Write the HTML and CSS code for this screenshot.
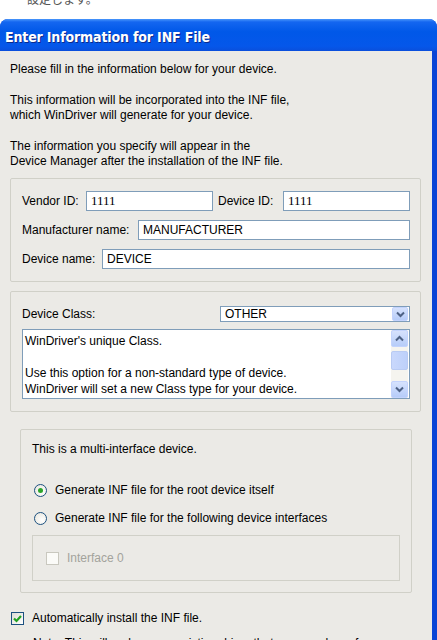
FILE: index.html
```html
<!DOCTYPE html>
<html lang="en">
<head>
    <meta charset="UTF-8">
    <title>Enter Information for INF File</title>
    <link rel="stylesheet" href="styles.css">
</head>
<body>
    <!-- --- TEXT ABOVE THE WINDOW --- -->
    <div class="caption"><p>設定します。</p></div>

    <!-- --- DIALOG WINDOW --- -->
    <div class="window">
        <div class="titlebar">Enter Information for INF File</div>
        <div class="dialog">
            <p class="intro">Please fill in the information below for your device.</p>
            <p class="intro">This information will be incorporated into the INF file,<br>which WinDriver will generate for your device.</p>
            <p class="intro intro-last">The information you specify will appear in the<br>Device Manager after the installation of the INF file.</p>

            <div class="group ids">
                <div class="row">
                    <label class="lbl-vendor">Vendor ID:</label>
                    <input type="text" class="field serif" value="1111">
                    <label class="lbl-device">Device ID:</label>
                    <input type="text" class="field serif" value="1111">
                </div>
                <div class="row">
                    <label class="lbl-manu">Manufacturer name:</label>
                    <input type="text" class="field" value="MANUFACTURER">
                </div>
                <div class="row">
                    <label class="lbl-name">Device name:</label>
                    <input type="text" class="field" value="DEVICE">
                </div>
            </div>

            <div class="group classes">
                <div class="row class-row">
                    <label>Device Class:</label>
                    <div class="combo">
                        <span class="combo-value">OTHER</span>
                        <span class="xp-btn">
                            <svg width="9" height="7" viewBox="0 0 9 7"><path d="M1 1.5 L4.5 5 L8 1.5" fill="none" stroke="#4d6185" stroke-width="2"/></svg>
                        </span>
                    </div>
                </div>
                <div class="memo">
                    <div class="memo-text">
                        WinDriver's unique Class.<br><br>
                        Use this option for a non-standard type of device.<br>
                        WinDriver will set a new Class type for your device.
                    </div>
                    <div class="scrollbar">
                        <span class="xp-btn sb-btn">
                            <svg width="9" height="7" viewBox="0 0 9 7"><path d="M1 5.5 L4.5 2 L8 5.5" fill="none" stroke="#4d6185" stroke-width="2"/></svg>
                        </span>
                        <span class="sb-track"><span class="sb-thumb"></span></span>
                        <span class="xp-btn sb-btn">
                            <svg width="9" height="7" viewBox="0 0 9 7"><path d="M1 1.5 L4.5 5 L8 1.5" fill="none" stroke="#4d6185" stroke-width="2"/></svg>
                        </span>
                    </div>
                </div>
            </div>

            <div class="group multi">
                <p>This is a multi-interface device.</p>
                <div class="option first"><span class="radio checked"></span>Generate INF file for the root device itself</div>
                <div class="option"><span class="radio"></span>Generate INF file for the following device interfaces</div>
                <div class="iface-box">
                    <div class="option disabled"><span class="check"></span>Interface 0</div>
                </div>
            </div>

            <div class="option auto">
                <span class="check checked">
                    <svg width="11" height="11" viewBox="0 0 11 11"><path d="M2 5.5 L4.5 8 L9 3" fill="none" stroke="#21a121" stroke-width="2.2"/></svg>
                </span>
                Automatically install the INF file.
            </div>
            <p class="note">Note: This will replace any existing driver that you may have for your device.</p>
        </div>
    </div>
</body>
</html>
```

FILE: styles.css
```css
/* --- RESET & GLOBAL STYLES --- */
* {
    margin: 0;
    padding: 0;
    box-sizing: border-box;
}

body {
    background-color: #fff;
    font-family: "Liberation Sans", Arial, sans-serif;
    font-size: 12px;
    color: #000;
    overflow: hidden;
}

/* --- TEXT ABOVE --- */
.caption {
    height: 19px;
    overflow: hidden;
    padding-left: 27px;
}

.caption p {
    margin-top: -9px;
    font: 12px/15px "Noto Sans CJK JP", sans-serif;
    color: #555;
}

/* --- WINDOW FRAME --- */
.window {
    height: 621px;
    background-color: #0a44d6;
    border-radius: 8px 8px 0 0;
    overflow: hidden;
}

.titlebar {
    height: 32px;
    padding: 7px 0 0 5px;
    color: #fff;
    font: bold 14px/23px "DejaVu Sans Condensed", "DejaVu Sans", sans-serif;
    letter-spacing: -0.15px;
    text-shadow: 1px 1px #0c2a8c;
    background: linear-gradient(#4a97fb 0, #1466f0 3px, #0058e8 40%, #0557ea 85%, #0a4fdc 100%);
}

.dialog {
    height: 589px;
    margin-right: 5px;
    padding: 11px 11px 0 10px;
    background-color: #ebeae6;
    line-height: 15px;
}

.intro {
    margin-bottom: 16px;
}

.intro-last {
    margin-bottom: 9px;
}

/* --- GROUP BOXES --- */
.group {
    border: 1px solid #d0d0c8;
    border-radius: 2px;
}

.ids {
    padding: 12px 10px 12px 11px;
}

.row {
    display: flex;
    align-items: center;
}

.ids .row + .row {
    margin-top: 9px;
}

.field {
    flex: 1;
    min-width: 0;
    height: 20px;
    padding: 0 4px;
    border: 1px solid #7f9db9;
    background-color: #fff;
    font: 12px "Liberation Sans", Arial, sans-serif;
    color: #000;
}

.serif {
    font-family: "Liberation Serif", "Times New Roman", serif;
    font-size: 13px;
}

.lbl-vendor { width: 64px; }
.lbl-device { width: 70px; padding-left: 5px; }
.lbl-manu { width: 116px; }
.lbl-name { width: 80px; }

.classes {
    margin-top: 9px;
    padding: 14px 10px 12px 11px;
}

.class-row {
    justify-content: space-between;
}

.combo {
    display: flex;
    align-items: center;
    width: 190px;
    height: 16px;
    padding: 1px;
    border: 1px solid #7f9db9;
    background-color: #fff;
}

.combo-value {
    flex: 1;
    padding-left: 3px;
    line-height: 14px;
}

.xp-btn {
    display: flex;
    align-items: center;
    justify-content: center;
    width: 16px;
    height: 14px;
    border-radius: 2px;
    background: linear-gradient(#d6e2fd, #b6ccf9);
    border: 1px solid #c3d3fd;
}

.memo {
    display: flex;
    height: 70px;
    margin-top: 7px;
    border: 1px solid #7f9db9;
    background-color: #fff;
}

.memo-text {
    flex: 1;
    padding: 3px 0 0 2px;
    line-height: 16px;
}

.scrollbar {
    display: flex;
    flex-direction: column;
    width: 17px;
    margin-right: 1px;
    background-color: #f5f4ef;
}

.sb-btn {
    width: 17px;
    height: 17px;
}

.sb-track {
    flex: 1;
    padding-top: 4px;
}

.sb-thumb {
    display: block;
    height: 19px;
    border-radius: 2px;
    border: 1px solid #b9cbf3;
    background: linear-gradient(90deg, #c9d8fc, #bdd0fa);
}

/* --- MULTI-INTERFACE --- */
.multi {
    margin: 17px 9px 0 10px;
    padding: 12px 11px 11px 11px;
}

.option {
    display: flex;
    align-items: center;
    height: 15px;
}

.option.first {
    margin-top: 26px;
}

.option + .option {
    margin-top: 13px;
}

.radio {
    width: 13px;
    height: 13px;
    margin: 0 8px 0 2px;
    border: 1px solid #1c5180;
    border-radius: 50%;
    background: radial-gradient(circle at 65% 65%, #ffffff, #e6e4da);
    display: flex;
    align-items: center;
    justify-content: center;
}

.radio.checked::after {
    content: "";
    width: 5px;
    height: 5px;
    border-radius: 50%;
    background-color: #2ba52b;
}

.iface-box {
    margin-top: 9px;
    padding: 15px 0 14px 13px;
    border: 1px solid #d0d0c8;
}

.check {
    display: flex;
    align-items: center;
    justify-content: center;
    width: 13px;
    height: 13px;
    margin-right: 8px;
    border: 1px solid #1c5180;
    background: linear-gradient(135deg, #dcdbd3, #ffffff);
}

.disabled {
    color: #a3a39c;
}

.disabled .check {
    border-color: #c9c8bf;
    background: #fbfbf8;
}

.auto {
    margin-top: 18px;
    margin-left: 1px;
}

.note {
    margin: 10px 0 0 23px;
}
```
